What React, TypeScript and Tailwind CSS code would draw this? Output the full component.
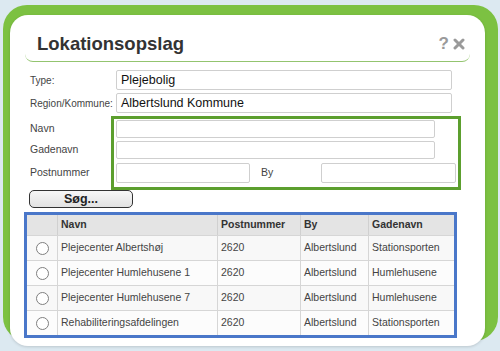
import React from "react";

type Row = { navn: string; postnummer: string; by: string; gadenavn: string };

const rows: Row[] = [
  { navn: "Plejecenter Albertshøj", postnummer: "2620", by: "Albertslund", gadenavn: "Stationsporten" },
  { navn: "Plejecenter Humlehusene 1", postnummer: "2620", by: "Albertslund", gadenavn: "Humlehusene" },
  { navn: "Plejecenter Humlehusene 7", postnummer: "2620", by: "Albertslund", gadenavn: "Humlehusene" },
  { navn: "Rehabiliteringsafdelingen", postnummer: "2620", by: "Albertslund", gadenavn: "Stationsporten" },
];

const input_class = "rounded-[2px] border border-[#cfcfcf] bg-white";

function CloseIcon() {
  return (
    <svg viewBox="0 0 12 12" className="h-[12px] w-[12px]" fill="none" stroke="#9a9a9a" strokeWidth="3" strokeLinecap="round">
      <path d="M2 2l8 8" />
      <path d="M10 2l-8 8" />
    </svg>
  );
}

function TextField({ value, className }: { value?: string; className: string }) {
  return (
    <div className={`${input_class} ${className} flex items-center pl-[4px] text-[12.5px] text-[#111]`}>
      {value}
    </div>
  );
}

export default function App() {
  return (
    <div
      className="relative h-[351px] w-[500px] overflow-hidden bg-[#dce9f1]"
      style={{ fontFamily: '"Liberation Sans", Arial, sans-serif' }}
    >
      {/* green backdrop behind the dialog */}
      <div className="absolute left-[3px] top-[5px] h-[336px] w-[495px] rounded-[24px] bg-[#7cc142]" />

      <div className="relative ml-[10px] mt-[15px] h-[331px] w-[475px] rounded-[18px] bg-white shadow-[0_1px_3px_rgba(0,0,0,0.15)]">
        {/* title bar */}
        <div className="mx-[15px] flex h-[47px] items-start justify-between rounded-b-[8px] border-b border-[#93c46f] pl-[12px] pr-[5px] pt-[17px]">
          <h1 className="text-[18.5px] font-bold leading-[24px] text-[#333]">Lokationsopslag</h1>
          <div className="flex items-center gap-[4px] pt-[3px]">
            <span className="text-[17px] font-bold leading-[18px] text-[#9a9a9a]">?</span>
            <CloseIcon />
          </div>
        </div>

        {/* type / region */}
        <div className="mt-[8px] flex flex-col gap-[3px] pl-[20px]">
          <div className="flex items-center">
            <span className="w-[86px] text-[10px] text-[#444]">Type:</span>
            <TextField value="Plejebolig" className="h-[20px] w-[336px]" />
          </div>
          <div className="flex items-center">
            <span className="w-[86px] text-[10px] text-[#444]">Region/Kommune:</span>
            <TextField value="Albertslund Kommune" className="h-[20px] w-[336px]" />
          </div>
        </div>

        {/* search fields */}
        <div className="mt-[3px] flex pl-[20px]">
          <div className="flex w-[81px] flex-col pt-[4px] text-[10.5px] text-[#444]">
            <span className="flex h-[18px] items-center">Navn</span>
            <span className="mt-[3px] flex h-[18px] items-center">Gadenavn</span>
            <span className="mt-[4px] flex h-[20px] items-center">Postnummer</span>
          </div>
          <div className="flex w-[350px] flex-col border-[3px] border-[#5c9f2e] pb-[4px] pl-[2px] pt-[1px]">
            <TextField className="h-[18px] w-[319px]" />
            <TextField className="mt-[3px] h-[18px] w-[319px]" />
            <div className="mt-[4px] flex items-center">
              <TextField className="h-[20px] w-[134px]" />
              <span className="w-[71px] pl-[11px] text-[10.5px] text-[#444]">By</span>
              <TextField className="h-[20px] w-[135px]" />
            </div>
          </div>
        </div>

        <button
          type="button"
          className="ml-[19px] flex h-[18px] w-[104px] items-center justify-center rounded-[5px] border-[1.5px] border-[#333] bg-gradient-to-b from-[#f7f7f7] to-[#e2e2e2] text-[12.5px] font-bold text-[#222]"
        >
          Søg...
        </button>

        {/* results */}
        <div className="ml-[14px] mt-[4px] w-[433px] border-[3px] border-[#4a77c9]">
          <div className="grid h-[20px] grid-cols-[30px_160px_83px_68px_86px] bg-[#e4e4e4] text-[10.5px] font-bold text-[#333]">
            <div />
            <div className="flex items-center border-l border-[#d0d0d0] pl-[3px]">Navn</div>
            <div className="flex items-center border-l border-[#d0d0d0] pl-[3px]">Postnummer</div>
            <div className="flex items-center border-l border-[#d0d0d0] pl-[3px]">By</div>
            <div className="flex items-center border-l border-[#d0d0d0] pl-[3px]">Gadenavn</div>
          </div>
          {rows.map((row, index) => (
            <div
              key={row.navn}
              className={`grid h-[25px] grid-cols-[30px_160px_83px_68px_86px] border-t border-[#d6d6d6] text-[10.5px] text-[#444] ${
                index % 2 === 0 ? "bg-[#f8f8f8]" : "bg-[#fcfcfc]"
              }`}
            >
              <div className="flex items-center justify-center">
                <span className="h-[13px] w-[13px] rounded-full border border-[#7f7f7f] bg-white" />
              </div>
              <div className="flex items-center border-l border-[#d6d6d6] pl-[3px]">{row.navn}</div>
              <div className="flex items-center border-l border-[#d6d6d6] pl-[3px]">{row.postnummer}</div>
              <div className="flex items-center border-l border-[#d6d6d6] pl-[3px]">{row.by}</div>
              <div className="flex items-center border-l border-[#d6d6d6] pl-[3px]">{row.gadenavn}</div>
            </div>
          ))}
        </div>
      </div>
    </div>
  );
}
